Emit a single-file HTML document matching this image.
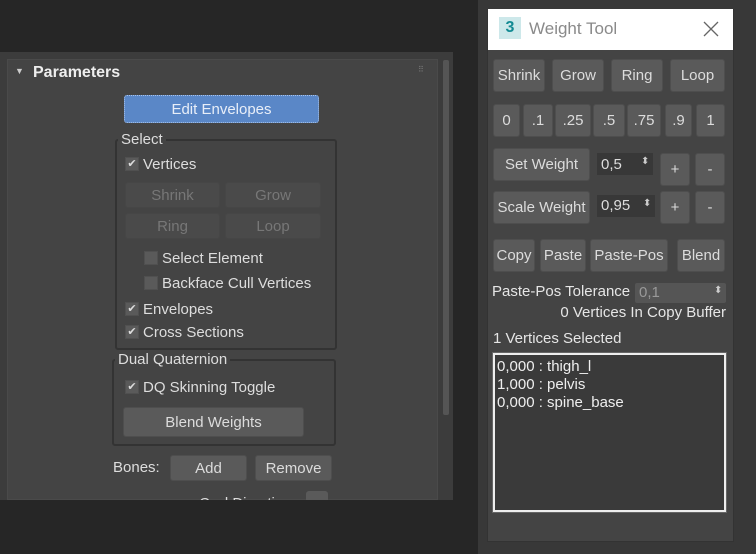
<!DOCTYPE html>
<html><head><meta charset="utf-8"><style>
*{margin:0;padding:0;box-sizing:border-box}
body{width:756px;height:554px;background:#262626;position:relative;overflow:hidden;font-family:"Liberation Sans",sans-serif;font-size:15px;color:#ddd}
div,span{position:absolute}
.t{white-space:nowrap;line-height:1}
.b{background:#5a5a5a;border:1px solid #4e4e4e;border-radius:3px;color:#dcdcdc;display:flex;align-items:center;justify-content:center;white-space:nowrap;font-size:15px}
.d{background:#4a4a4a;color:#777;border-color:#464646}
.g{border:2px solid #333;border-radius:3px}
.gl{background:#444;padding:0 3px;color:#ddd;font-size:15px;line-height:1;white-space:nowrap}
.cb{width:14px;height:14px;background:#5a5a5a;border:1px solid #505050;color:#ddd;font-size:11px;line-height:12px;text-align:center}
</style></head><body>
<!-- left panel -->
<div style="left:0;top:52px;width:453px;height:448px;background:#3c3c3c"></div>
<div style="left:7px;top:59px;width:431px;height:441px;background:#444;border:1px solid #4a4a4a"></div>
<div style="left:443px;top:60px;width:6px;height:355px;background:#555;border-radius:2px"></div>
<div class="t" style="left:15px;top:67px;font-size:9px;color:#ccc">▼</div>
<div class="t" style="left:33px;top:65px;font-size:16px;font-weight:bold;color:#eee">Parameters</div>
<div class="t" style="left:418px;top:66px;font-size:8px;color:#777">⠿</div>
<div class="b" style="left:124px;top:95px;width:195px;height:28px;background:#5a87c7;border:1px dotted #aac4ea;color:#e8eef8">Edit Envelopes</div>

<div class="g" style="left:115px;top:139px;width:222px;height:211px"></div>
<div class="gl" style="left:118px;top:132px">Select</div>
<div class="cb" style="left:125px;top:157px">✔</div><div class="t" style="left:143px;top:157px">Vertices</div>
<div class="b d" style="left:125px;top:182px;width:95px;height:26px">Shrink</div>
<div class="b d" style="left:225px;top:182px;width:96px;height:26px">Grow</div>
<div class="b d" style="left:125px;top:213px;width:95px;height:26px">Ring</div>
<div class="b d" style="left:225px;top:213px;width:96px;height:26px">Loop</div>
<div class="cb" style="left:144px;top:251px"></div><div class="t" style="left:162px;top:251px">Select Element</div>
<div class="cb" style="left:144px;top:276px"></div><div class="t" style="left:162px;top:276px">Backface Cull Vertices</div>
<div class="cb" style="left:125px;top:302px">✔</div><div class="t" style="left:143px;top:302px">Envelopes</div>
<div class="cb" style="left:125px;top:325px">✔</div><div class="t" style="left:143px;top:325px">Cross Sections</div>

<div class="g" style="left:112px;top:359px;width:224px;height:87px"></div>
<div class="gl" style="left:115px;top:352px">Dual Quaternion</div>
<div class="cb" style="left:125px;top:380px">✔</div><div class="t" style="left:143px;top:380px">DQ Skinning Toggle</div>
<div class="b" style="left:123px;top:407px;width:181px;height:30px">Blend Weights</div>
<div class="t" style="left:113px;top:460px">Bones:</div>
<div class="b" style="left:170px;top:455px;width:77px;height:26px">Add</div>
<div class="b" style="left:255px;top:455px;width:77px;height:26px">Remove</div>
<div class="t" style="left:199px;top:496px;color:#ddd">Cycl Direction</div>
<div style="left:306px;top:491px;width:22px;height:12px;background:#5a5a5a;border-radius:3px"></div>
<div style="left:0;top:500px;width:478px;height:54px;background:#262626"></div>

<!-- right -->
<div style="left:478px;top:0;width:278px;height:554px;background:#383838"></div>
<div style="left:487px;top:9px;width:247px;height:533px;background:#444;border:1px solid #333"></div>
<div style="left:488px;top:9px;width:245px;height:41px;background:#fff"></div>
<div style="left:499px;top:17px;width:22px;height:22px;background:#cde8ea;color:#138a93;font-weight:bold;font-size:16px;text-align:center;line-height:22px">3</div>
<div class="t" style="left:529px;top:20px;font-size:17px;color:#8a8a8a">Weight Tool</div>
<svg style="position:absolute;left:703px;top:21px" width="16" height="16"><path d="M1 1L15 15M15 1L1 15" stroke="#666" stroke-width="1.3"/></svg>

<div class="b" style="left:493px;top:59px;width:52px;height:33px">Shrink</div>
<div class="b" style="left:552px;top:59px;width:52px;height:33px">Grow</div>
<div class="b" style="left:611px;top:59px;width:52px;height:33px">Ring</div>
<div class="b" style="left:670px;top:59px;width:55px;height:33px">Loop</div>

<div class="b" style="left:493px;top:104px;width:27px;height:33px">0</div>
<div class="b" style="left:523px;top:104px;width:30px;height:33px">.1</div>
<div class="b" style="left:555px;top:104px;width:36px;height:33px">.25</div>
<div class="b" style="left:593px;top:104px;width:32px;height:33px">.5</div>
<div class="b" style="left:627px;top:104px;width:34px;height:33px">.75</div>
<div class="b" style="left:665px;top:104px;width:27px;height:33px">.9</div>
<div class="b" style="left:696px;top:104px;width:29px;height:33px">1</div>

<div class="b" style="left:493px;top:148px;width:97px;height:33px">Set Weight</div>
<div style="left:597px;top:153px;width:56px;height:22px;background:#383838"></div>
<div class="t" style="left:601px;top:157px;color:#ddd">0,5</div><div class="t" style="left:641px;top:157px;font-size:10px;color:#ccc">⬍</div>
<div class="b" style="left:660px;top:153px;width:30px;height:33px">+</div>
<div class="b" style="left:695px;top:153px;width:30px;height:33px">-</div>
<div class="b" style="left:493px;top:191px;width:97px;height:33px">Scale Weight</div>
<div style="left:597px;top:195px;width:58px;height:22px;background:#383838"></div>
<div class="t" style="left:601px;top:198px;color:#ddd">0,95</div><div class="t" style="left:643px;top:199px;font-size:10px;color:#ccc">⬍</div>
<div class="b" style="left:660px;top:191px;width:30px;height:33px">+</div>
<div class="b" style="left:695px;top:191px;width:30px;height:33px">-</div>

<div class="b" style="left:493px;top:239px;width:42px;height:33px">Copy</div>
<div class="b" style="left:540px;top:239px;width:46px;height:33px">Paste</div>
<div class="b" style="left:590px;top:239px;width:78px;height:33px">Paste-Pos</div>
<div class="b" style="left:677px;top:239px;width:48px;height:33px">Blend</div>

<div class="t" style="left:492px;top:284px;color:#e6e6e6">Paste-Pos Tolerance</div>
<div style="left:635px;top:283px;width:91px;height:20px;background:#555;border-radius:2px"></div>
<div class="t" style="left:639px;top:285px;color:#999">0,1</div><div class="t" style="left:714px;top:286px;font-size:10px;color:#ccc">⬍</div>
<div class="t" style="left:556px;top:305px;width:170px;text-align:right;color:#e6e6e6">0 Vertices In Copy Buffer</div>
<div class="t" style="left:493px;top:331px;color:#e6e6e6">1 Vertices Selected</div>
<div style="left:493px;top:353px;width:233px;height:159px;background:#3a3a3a;border:2px solid #eee;outline:1px solid #666"></div>
<div class="t" style="left:497px;top:358px;color:#eee;line-height:18px">0,000 : thigh_l<br>1,000 : pelvis<br>0,000 : spine_base</div>
</body></html>
